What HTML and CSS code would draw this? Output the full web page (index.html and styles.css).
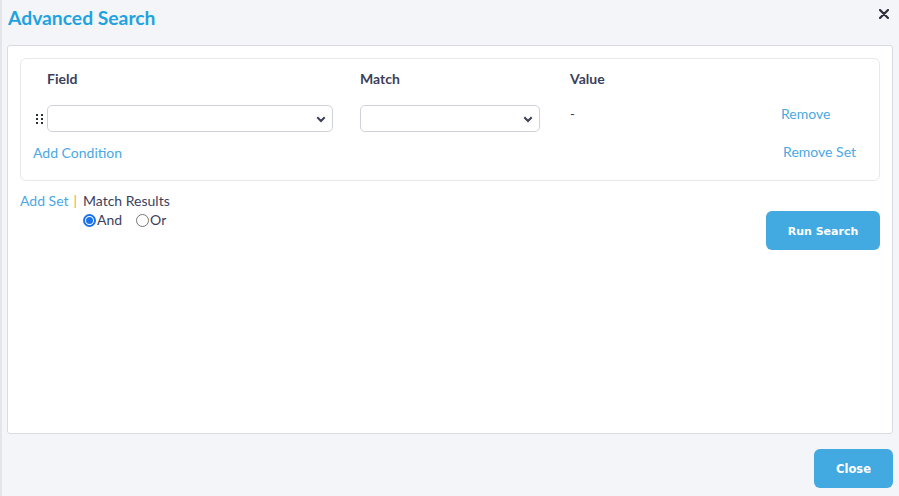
FILE: index.html
```html
<!DOCTYPE html>
<html>
<head>
<meta charset="utf-8">
<link rel="stylesheet" href="styles.css">
</head>
<body>
<div class="dialog">
  <div class="header">
    <h1 class="title">Advanced Search</h1>
    <span class="close-x">
      <svg width="10" height="10" viewBox="0 0 10 10"><path d="M1 1L9 9M9 1L1 9" stroke="#2b2f3a" stroke-width="2.2" stroke-linecap="round"/></svg>
    </span>
  </div>
  <div class="panel">
    <div class="set">
      <div class="grid">
        <div class="h h-field">Field</div>
        <div class="h h-match">Match</div>
        <div class="h h-value">Value</div>
        <div class="h"></div>

        <div class="cell handle-cell">
          <span class="handle">
            <svg width="8" height="10" viewBox="0 0 8 10"><g fill="#2b2f3a"><rect x="0" y="0" width="2" height="2"/><rect x="5" y="0" width="2" height="2"/><rect x="0" y="4" width="2" height="2"/><rect x="5" y="4" width="2" height="2"/><rect x="0" y="8" width="2" height="2"/><rect x="5" y="8" width="2" height="2"/></g></svg>
          </span>
          <div class="select sel-field"><span class="chev"><svg width="10" height="7" viewBox="0 0 10 7"><path d="M1.3 1.3L5 5L8.7 1.3" fill="none" stroke="#3b3f55" stroke-width="2"/></svg></span></div>
        </div>
        <div class="cell"><div class="select sel-match"><span class="chev"><svg width="10" height="7" viewBox="0 0 10 7"><path d="M1.3 1.3L5 5L8.7 1.3" fill="none" stroke="#3b3f55" stroke-width="2"/></svg></span></div></div>
        <div class="cell dash">-</div>
        <div class="cell"><a class="link remove">Remove</a></div>
      </div>
      <div class="set-foot">
        <a class="link">Add Condition</a>
        <a class="link remove-set">Remove Set</a>
      </div>
    </div>
    <div class="below">
      <div class="results">
        <div class="results-top"><a class="link">Add Set</a><span class="sep">|</span><span class="mr">Match Results</span></div>
        <div class="radios">
          <label class="radio"><span class="rb on"></span>And</label>
          <label class="radio"><span class="rb"></span>Or</label>
        </div>
      </div>
      <button class="btn run">Run Search</button>
    </div>
  </div>
  <div class="footer">
    <button class="btn close">Close</button>
  </div>
</div>
</body>
</html>
```
FILE: styles.css
```css
html, body { margin: 0; padding: 0; }
body {
  background: #f4f5f9;
  font-family: Lato, "Open Sans", sans-serif;
  width: 899px;
  height: 496px;
  overflow: hidden;
}
.dialog {
  border-left: 2px solid #e3e5ea;
  height: 496px;
  box-sizing: border-box;
  display: flex;
  flex-direction: column;
}
.header {
  height: 44px;
  display: flex;
  justify-content: space-between;
  padding: 0 10px 0 6px;
}
.title {
  margin: 0;
  margin-top: 7px;
  font-size: 19.3px;
  font-weight: 700;
  color: #1fa3e0;
  line-height: 22px;
}
.close-x { margin-top: 9px; width: 10px; height: 10px; display: flex; }
.panel {
  margin: 1px 6px 0 5px;
  height: 389px;
  background: #fff;
  border: 1px solid #d9dbe0;
  border-radius: 3px;
  box-sizing: border-box;
  padding: 12px 12px 0 12px;
}
.set {
  border: 1px solid #e6e8ec;
  border-radius: 6px;
  height: 123px;
  box-sizing: border-box;
  padding: 0 0 0 12px;
}
.grid {
  display: grid;
  grid-template-columns: 327px 210px 211px 1fr;
  grid-template-rows: 41px 40px;
}
.h {
  font-size: 14px;
  font-weight: 700;
  color: #3b3f5c;
  padding-top: 12px;
  line-height: 16px;
}
.h-field { padding-left: 14px; }
.cell { display: flex; align-items: flex-start; padding-top: 5px; }
.handle-cell { gap: 3px; }
.handle { width: 8px; display: flex; padding-left: 3px; padding-top: 9px; }
.select {
  height: 27px;
  box-sizing: border-box;
  border: 1px solid #cfd2d8;
  border-radius: 5px;
  display: flex;
  justify-content: flex-end;
  align-items: center;
  padding-right: 6px;
}
.sel-field { width: 286px; }
.sel-match { width: 180px; }
.chev { display: flex; margin-top: 1px; }
.dash {
  font-size: 13px;
  color: #3b3f5c;
  padding-top: 6px;
  padding-left: 0;
}
.link {
  color: #4aa8e2;
  font-size: 14px;
  cursor: pointer;
  line-height: 16px;
}
.remove { padding-top: 1px; }
.set-foot {
  display: flex;
  justify-content: space-between;
  padding: 0 23px 0 0;
  margin-top: 5px;
}
.remove-set { margin-top: -1px; }
.below {
  display: flex;
  justify-content: space-between;
  margin-top: 12px;
}
.results { font-size: 14px; color: #3b3f5c; }
.results-top { display: flex; align-items: center; line-height: 16px; }
.sep { color: #eca24a; margin: 0 6px 0 5px; }
.mr { color: #3b3f5c; }
.radios { display: flex; gap: 14px; padding-left: 63px; margin-top: 3px; line-height: 16px; }
.radio { display: flex; align-items: center; color: #3b3f5c; }
.rb {
  width: 13px; height: 13px;
  box-sizing: border-box;
  border: 1px solid #767676;
  border-radius: 50%;
  margin-right: 1px;
  position: relative;
}
.rb.on {
  border: 2px solid #1a73e8;
  background: #fff;
}
.rb.on::after {
  content: "";
  position: absolute;
  left: 1px; top: 1px;
  width: 7px; height: 7px;
  border-radius: 50%;
  background: #1a73e8;
}
.btn {
  border: none;
  background: #42a9e1;
  color: #fff;
  font-family: "DejaVu Sans", Verdana, sans-serif;
  font-weight: 700;
  font-size: 11px;
  border-radius: 6px;
  cursor: pointer;
}
.run { width: 114px; height: 39px; margin-top: 18px; padding-top: 2px; }
.footer {
  display: flex;
  justify-content: flex-end;
  padding: 15px 6px 0 0;
}
.close { width: 79px; height: 39px; font-size: 11.5px; padding-top: 1px; }
```
